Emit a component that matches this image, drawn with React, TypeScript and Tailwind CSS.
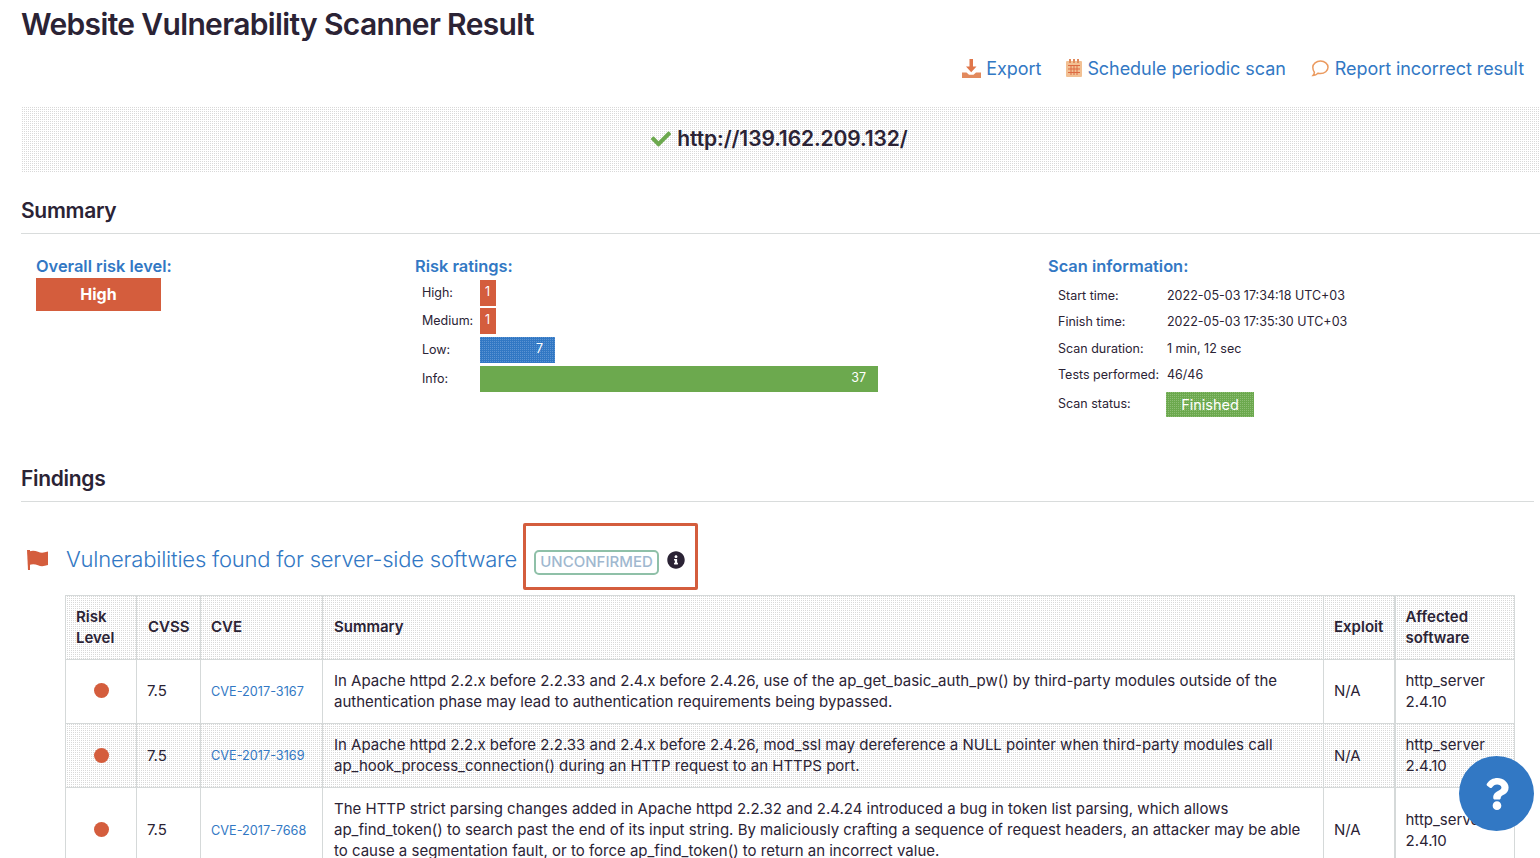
import { FaCheck, FaInfoCircle, FaQuestion } from 'react-icons/fa';

const dither =
  'bg-[repeating-conic-gradient(#d9d9d9_0_25%,#ffffff_0_100%)] bg-[length:2px_2px]';

const ratings = [
  { label: 'High:', value: 1, bar: 'w-[16px] bg-[#d45d3d] pr-[6px]', rowGap: 'mb-[2px]' },
  { label: 'Medium:', value: 1, bar: 'w-[16px] bg-[#d45d3d] pr-[6px]', rowGap: 'mb-[3px]' },
  {
    label: 'Low:',
    value: 7,
    bar: 'w-[75px] pr-[12px] bg-[repeating-conic-gradient(#3278c4_0_75%,#5b93d2_0_100%)] bg-[length:2px_2px]',
    rowGap: 'mb-[3px]',
  },
  { label: 'Info:', value: 37, bar: 'w-[398px] bg-[#6ca94e] pr-[12px]', rowGap: '' },
];

const scanInfo = [
  { label: 'Start time:', value: '2022-05-03 17:34:18 UTC+03' },
  { label: 'Finish time:', value: '2022-05-03 17:35:30 UTC+03' },
  { label: 'Scan duration:', value: '1 min, 12 sec' },
  { label: 'Tests performed:', value: '46/46' },
];

const findings = [
  {
    cve: 'CVE-2017-3167',
    text: 'In Apache httpd 2.2.x before 2.2.33 and 2.4.x before 2.4.26, use of the ap_get_basic_auth_pw() by third-party modules outside of the authentication phase may lead to authentication requirements being bypassed.',
  },
  {
    cve: 'CVE-2017-3169',
    text: 'In Apache httpd 2.2.x before 2.2.33 and 2.4.x before 2.4.26, mod_ssl may dereference a NULL pointer when third-party modules call ap_hook_process_connection() during an HTTP request to an HTTPS port.',
  },
  {
    cve: 'CVE-2017-7668',
    text: 'The HTTP strict parsing changes added in Apache httpd 2.2.32 and 2.4.24 introduced a bug in token list parsing, which allows ap_find_token() to search past the end of its input string. By maliciously crafting a sequence of request headers, an attacker may be able to cause a segmentation fault, or to force ap_find_token() to return an incorrect value.',
  },
];

function ExportIcon() {
  return (
    <svg width="19" height="19" viewBox="0 0 19 19" className="shrink-0">
      <path d="M7.500 0h3.500v7.500h3.500L9.200 13.200 4 7.500h3.500z" fill="#e0764a" />
      <path d="M0 13.500h4.500l2.500 2.300h4.500l2.500-2.300H19V19H0z" fill="#e28a5e" />
    </svg>
  );
}

function CalendarIcon() {
  return (
    <svg width="16" height="18" viewBox="0 0 16 18" className="shrink-0">
      <path d="M1 2h14a1 1 0 0 1 1 1v14a1 1 0 0 1-1 1H1a1 1 0 0 1-1-1V3a1 1 0 0 1 1-1z" fill="#f2c093" />
      <path d="M3 0h2v4H3zM7 0h2v4H7zM11 0h2v4h-2z" fill="#e08a5c" />
      <path
        d="M2 6.500h12M2 10h12M2 13.500h12M5 6v10M8 6v10M11 6v10"
        stroke="#dd6b42"
        strokeWidth="1"
        fill="none"
      />
    </svg>
  );
}

function CommentIcon() {
  return (
    <svg width="18" height="17" viewBox="0 0 18 17" className="shrink-0">
      <path
        d="M9.500 1c4.100 0 7.500 2.800 7.500 6.300s-3.400 6.300-7.500 6.300c-.9 0-1.700-.1-2.500-.4-1.300 1.300-3.200 2.200-5 2.300.8-1 1.300-2 1.400-3.300C2.400 11 1.800 9.300 1.800 7.300 1.800 3.800 5.400 1 9.500 1z"
        fill="none"
        stroke="#eb9a5f"
        strokeWidth="1.500"
      />
    </svg>
  );
}

function FlagIcon() {
  return (
    <svg width="21" height="20" viewBox="0 0 21 20" className="shrink-0 mt-[6px]">
      <path d="M0 0h3v20H1z" fill="#d45d3d" />
      <path d="M2 1.500c3-1.200 6-1 9 .3s6 1 10-.3V15c-4 1.300-7 1.600-10 .3S5 14 2 15z" fill="#d45d3d" />
    </svg>
  );
}

function SectionTitle({ title, className }: { title: string; className: string }) {
  return (
    <div className={`border-b border-[#d9dcdc] text-[21px] leading-[28px] font-semibold text-[#2b2335] tracking-[-0.3px] pt-[1px] pb-[8px] ${className}`}>
      {title}
    </div>
  );
}

export default function App() {
  return (
    <div className="h-[858px] overflow-hidden bg-white pl-[21px] text-[#2b2335] font-['Inter',sans-serif]">
      <h1 className="text-[30px] leading-[36px] mt-[6px] font-semibold tracking-[-0.65px]">
        Website Vulnerability Scanner Result
      </h1>

      <div className="flex justify-end items-center gap-[25px] mt-[8px] pr-[16px] h-[36px] text-[18px] tracking-[-0.06px] text-[#3278c4]">
        <a className="flex items-center gap-[5px]">
          <ExportIcon />
          Export
        </a>
        <a className="flex items-center gap-[5px]">
          <CalendarIcon />
          Schedule periodic scan
        </a>
        <a className="flex items-center gap-[6px]">
          <CommentIcon />
          Report incorrect result
        </a>
      </div>

      <div className={`h-[66px] mt-[21px] pb-[2px] pr-[2px] flex items-center justify-center gap-[6px] ${dither}`}>
        <FaCheck className="text-[#6ca94e] text-[20px]" />
        <span className="text-[21px] font-semibold tracking-[-0.1px]">http://139.162.209.132/</span>
      </div>

      <SectionTitle title="Summary" className="mt-[23px]" />

      <div className="grid grid-cols-[379px_633px_1fr] pl-[15px] h-[220px] pt-[21px]">
        <div>
          <div className="text-[16.400px] leading-[22px] font-semibold text-[#3278c4]">Overall risk level:</div>
          <div className="w-[125px] h-[33px] mt-[1px] pb-[1px] bg-[#d45d3d] text-white text-[16px] font-bold flex items-center justify-center">
            High
          </div>
        </div>

        <div>
          <div className="text-[16.400px] leading-[22px] font-semibold text-[#3278c4]">Risk ratings:</div>
          <div className="mt-[3px] pl-[7px]">
            {ratings.map((r) => (
              <div key={r.label} className={`flex items-center h-[26px] text-[12.500px] ${r.rowGap}`}>
                <span className="w-[58px]">{r.label}</span>
                <div className={`${r.bar} h-full flex items-center justify-end pb-[1px] text-white text-[12.500px]`}>
                  {r.value}
                </div>
              </div>
            ))}
          </div>
        </div>

        <div>
          <div className="text-[16.400px] leading-[22px] font-semibold text-[#3278c4]">Scan information:</div>
          <div className="pl-[10px] mt-[6px] text-[12.500px]">
            {scanInfo.map((row) => (
              <div key={row.label} className="flex items-center h-[26.400px]">
                <span className="w-[109px]">{row.label}</span>
                <span>{row.value}</span>
              </div>
            ))}
            <div className="flex items-center h-[30px] mt-[1px]">
              <span className="w-[108px] pb-[1px]">Scan status:</span>
              <span className="w-[88px] h-[25px] bg-[repeating-conic-gradient(#6ca94e_0_75%,#8dbd74_0_100%)] bg-[length:2px_2px] text-white text-[14.500px] flex items-center justify-center">
                Finished
              </span>
            </div>
          </div>
        </div>
      </div>

      <SectionTitle title="Findings" className="mr-[6px] mt-[10px]" />

      <div className="flex items-center mt-[21px] pl-[6px] h-[67px]">
        <FlagIcon />
        <h2 className="ml-[18px] pt-[6px] text-[22px] font-light text-[#3278c4] tracking-[-0.2px]">
          Vulnerabilities found for server-side software
        </h2>
        <div className="ml-[6px] h-[67px] w-[175px] border-[3px] border-[#d45d3d] rounded-[2px] flex items-center pl-[8px] pt-[12px]">
          <span className="w-[125px] h-[25px] border-2 border-[#8fc0a8] rounded-[5px] flex items-center justify-center text-[15px] font-medium text-[#9fb8cf]">
            UNCONFIRMED
          </span>
          <FaInfoCircle className="ml-[8px] mb-[5px] text-[18px] text-[#2b2335]" />
        </div>
      </div>

      <div className="ml-[44px] mt-[5px] w-[1449px]">
        <table className="w-full table-fixed border-collapse text-[15px] leading-[21px]">
          <colgroup>
            <col className="w-[71px]" />
            <col className="w-[64px]" />
            <col className="w-[122px]" />
            <col className="w-[1001px]" />
            <col className="w-[71px]" />
            <col className="w-[120px]" />
          </colgroup>
          <thead>
            <tr className={`h-[64px] text-left font-semibold ${dither}`}>
              <th className="border border-[#d5d9d9] px-[10px] pb-[2px] font-semibold">Risk Level</th>
              <th className="border border-[#d5d9d9] pl-[11px] pr-[9px] pb-[2px] font-semibold">CVSS</th>
              <th className="border border-[#d5d9d9] px-[10px] pb-[2px] font-semibold">CVE</th>
              <th className="border border-[#d5d9d9] pl-[11px] pr-[9px] pb-[2px] font-semibold">Summary</th>
              <th className="border border-[#d5d9d9] px-[10px] pb-[2px] font-semibold">Exploit</th>
              <th className="border border-[#d5d9d9] border-l-2 pl-[10px] pr-[9px] pb-[2px] font-semibold">Affected software</th>
            </tr>
          </thead>
          <tbody>
            {findings.map((f, i) => (
              <tr key={f.cve} className={i === 1 ? dither : ''}>
                <td className={`border border-[#d5d9d9] px-[10px] ${i === 1 ? 'pb-0' : 'pb-[2px]'}`}>
                  <div className="mx-auto w-[15px] h-[15px] rounded-full bg-[#d45d3d]" />
                </td>
                <td className={`border border-[#d5d9d9] px-[10px] ${i === 1 ? 'pb-0' : 'pb-[2px]'}`}>7.5</td>
                <td className="border border-[#d5d9d9] px-[10px] text-[12.700px] text-[#3278c4]">{f.cve}</td>
                <td className="border border-[#d5d9d9] pl-[11px] pr-[9px] pt-[10px] pb-[11px]">{f.text}</td>
                <td className={`border border-[#d5d9d9] px-[10px] ${i === 1 ? 'pb-0' : 'pb-[2px]'}`}>N/A</td>
                <td className={`border border-[#d5d9d9] border-l-2 pl-[10px] pr-[9px] ${i === 2 ? 'pb-0' : 'pb-[2px]'}`}>http_server 2.4.10</td>
              </tr>
            ))}
          </tbody>
        </table>
      </div>

      <button className="fixed left-[1459px] top-[756px] w-[75px] h-[75px] rounded-full bg-[#3278c4] flex items-center justify-center">
        <FaQuestion className="text-white text-[32px]" />
      </button>
    </div>
  );
}
